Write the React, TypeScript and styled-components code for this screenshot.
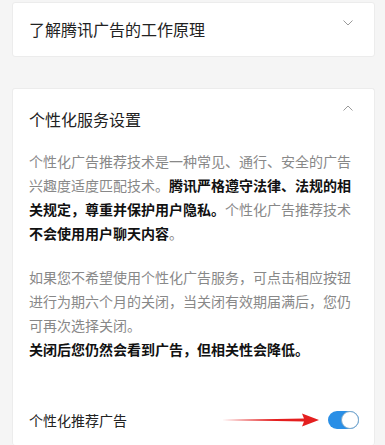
import React from "react";
import styled, { createGlobalStyle } from "styled-components";

const Global = createGlobalStyle`
  html, body { margin: 0; padding: 0; background: #f5f5f5; }
  body { font-family: "Noto Sans CJK SC", "Noto Sans", sans-serif; -webkit-font-smoothing: antialiased; }
`;

const Page = styled.div`
  width: 385px;
  height: 445px;
  overflow: hidden;
  padding: 2px 10px 0 12px;
  box-sizing: border-box;
  display: flex;
  flex-direction: column;
  gap: 31px;
`;

const Card = styled.div<{ $open?: boolean }>`
  background: #fff;
  border: 1px solid #ececec;
  border-radius: 3px;
  box-sizing: border-box;
  ${(p) => (p.$open ? "flex: 1; border-bottom: none;" : "height: 55px;")}
`;

const Header = styled.div<{ $h: number }>`
  height: ${(p) => p.$h}px;
  display: flex;
  align-items: center;
  justify-content: space-between;
  padding: 0 20px 0 16px;
  position: relative;
`;

const Title = styled.div`
  font-size: 16px;
  color: #222;
  line-height: 24px;
`;

const Chevron = styled.svg<{ $top: number }>`
  position: absolute;
  right: 21px;
  top: ${(p) => p.$top}px;
`;

const Body = styled.div`
  padding: 0 0 0 16px;
  width: 324px;
  font-size: 14px;
  line-height: 24px;
  color: #888;
`;

const Para = styled.p<{ $last?: boolean }>`
  margin: 0 0 ${(p) => (p.$last ? 0 : 20)}px 0;
`;

const Strong = styled.b`
  color: #111;
  font-weight: 700;
`;

const Row = styled.div`
  margin-top: 47px;
  display: flex;
  align-items: center;
  padding: 0 15px 0 16px;
  height: 24px;
`;

const RowLabel = styled.div`
  font-size: 14px;
  color: #222;
  flex: 1;
`;

const Arrow = styled.svg`
  margin-right: 8px;
`;

const Switch = styled.div`
  width: 31px;
  height: 18px;
  border-radius: 9px;
  background: #2a8fe6;
  position: relative;
`;

const Knob = styled.div`
  position: absolute;
  right: 0;
  top: 0;
  width: 16px;
  height: 16px;
  border-radius: 50%;
  background: #fff;
  border: 1px solid #7fa9c9;
`;

export default function App() {
  return (
    <>
      <Global />
      <Page>
        <Card>
          <Header $h={51}>
            <Title>了解腾讯广告的工作原理</Title>
            <Chevron $top={17} width="10" height="6" viewBox="0 0 10 6">
              <path d="M0.5 0.5 L5 5 L9.5 0.5" fill="none" stroke="#9a9a9a" strokeWidth="1" />
            </Chevron>
          </Header>
        </Card>
        <Card $open>
          <Header $h={60}>
            <Title>个性化服务设置</Title>
            <Chevron $top={16} width="10" height="6" viewBox="0 0 10 6">
              <path d="M0.5 5.5 L5 1 L9.5 5.5" fill="none" stroke="#9a9a9a" strokeWidth="1" />
            </Chevron>
          </Header>
          <Body>
            <Para>
              个性化广告推荐技术是一种常见、通行、安全的广告兴趣度适度匹配技术。
              <Strong>腾讯严格遵守法律、法规的相关规定，尊重并保护用户隐私。</Strong>
              个性化广告推荐技术<Strong>不会使用用户聊天内容</Strong>。
            </Para>
            <Para $last>
              如果您不希望使用个性化广告服务，可点击相应按钮进行为期六个月的关闭，当关闭有效期届满后，您仍可再次选择关闭。
              <br />
              <Strong>关闭后您仍然会看到广告，但相关性会降低。</Strong>
            </Para>
          </Body>
          <Row>
            <RowLabel>个性化推荐广告</RowLabel>
            <Arrow width="98" height="14" viewBox="0 0 98 14">
              <polygon points="0,7 82,5.6 80,0.5 97,7 80,13.5 82,8.4" fill="#e41f1f" />
            </Arrow>
            <Switch>
              <Knob />
            </Switch>
          </Row>
        </Card>
      </Page>
    </>
  );
}
